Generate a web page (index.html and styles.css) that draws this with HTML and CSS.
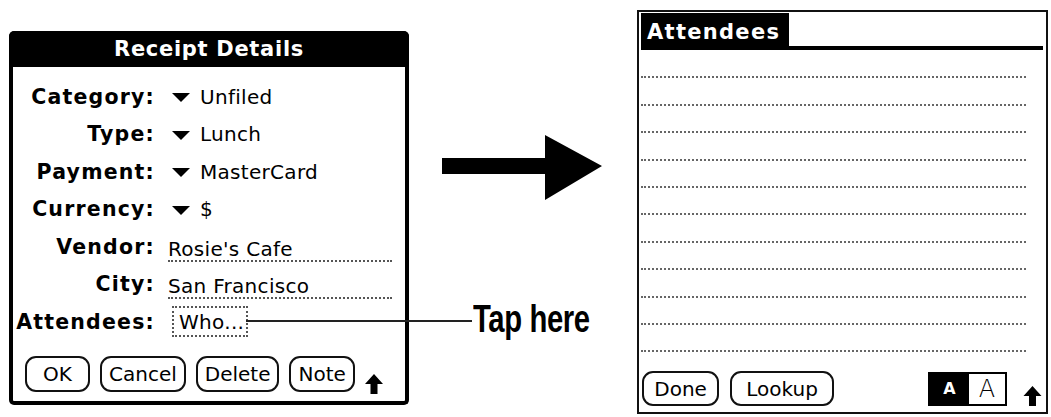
FILE: index.html
```html
<!DOCTYPE html>
<html>
<head>
<meta charset="utf-8">
<link rel="stylesheet" href="styles.css">
</head>
<body>
<div class="page">
  <div class="receipt">
    <div class="receipt-title">Receipt Details</div>
    <div class="fields">
      <div class="label">Category:</div>
      <div class="value"><span class="tri"></span>Unfiled</div>
      <div class="label">Type:</div>
      <div class="value"><span class="tri"></span>Lunch</div>
      <div class="label">Payment:</div>
      <div class="value"><span class="tri"></span>MasterCard</div>
      <div class="label">Currency:</div>
      <div class="value"><span class="tri"></span>$</div>
      <div class="label">Vendor:</div>
      <div class="value"><span class="field">Rosie's Cafe</span></div>
      <div class="label">City:</div>
      <div class="value"><span class="field">San Francisco</span></div>
      <div class="label">Attendees:</div>
      <div class="value"><span class="who">Who...</span></div>
    </div>
    <div class="btn-row">
      <span class="btn">OK</span>
      <span class="btn">Cancel</span>
      <span class="btn">Delete</span>
      <span class="btn">Note</span>
      <svg class="up" width="18" height="20" viewBox="0 0 18 20"><polygon points="9,0 18,10 12.5,10 12.5,20 5.5,20 5.5,10 0,10" fill="#000"/></svg>
    </div>
  </div>

  <div class="middle">
    <svg class="arrow" width="160" height="66" viewBox="0 0 160 66"><polygon points="0,23 103,23 103,0 160,31 103,65 103,39 0,39" fill="#000"/></svg>
    <div class="tap"><span>Tap here</span></div>
  </div>

  <div class="attendees">
    <div class="att-head">
      <div class="att-tab">Attendees</div>
      <div class="att-rule"></div>
    </div>
    <div class="lines">
      <div class="line"></div><div class="line"></div><div class="line"></div>
      <div class="line"></div><div class="line"></div><div class="line"></div>
      <div class="line"></div><div class="line"></div><div class="line"></div>
      <div class="line"></div><div class="line"></div>
    </div>
    <div class="att-foot">
      <span class="btn done">Done</span>
      <span class="btn lookup">Lookup</span>
      <div class="fontsel"><span class="fs-on">A</span><span class="fs-off">A</span></div>
      <svg class="up2" width="22" height="20" viewBox="0 0 18 20"><polygon points="9,0 18,10 12.5,10 12.5,20 5.5,20 5.5,10 0,10" fill="#000"/></svg>
    </div>
  </div>
</div>
</body>
</html>
```
FILE: styles.css
```css
html, body {
  margin: 0;
  padding: 0;
  background: #fff;
}
body {
  width: 1051px;
  height: 417px;
  overflow: hidden;
  font-family: "DejaVu Sans", sans-serif;
  color: #000;
}
.page {
  display: flex;
  align-items: flex-start;
}

/* Left dialog */
.receipt {
  margin: 31px 0 0 9px;
  width: 400px;
  height: 374px;
  box-sizing: border-box;
  border: 4px solid #000;
  border-top: 0;
  border-radius: 6px 6px 5px 5px;
  display: flex;
  flex-direction: column;
}
.receipt-title {
  background: #000;
  color: #fff;
  height: 36px;
  margin: 0 -4px;
  border-radius: 5px 5px 0 0;
  display: flex;
  align-items: center;
  justify-content: center;
  font-weight: bold;
  font-size: 21px;
  letter-spacing: 0.7px;
}
.fields {
  display: grid;
  grid-template-columns: 142px 1fr;
  grid-auto-rows: 37.5px;
  column-gap: 13px;
  padding-top: 11px;
  padding-right: 13px;
}
.label {
  text-align: right;
  font-weight: bold;
  font-size: 20.5px;
  letter-spacing: 1.2px;
  display: flex;
  align-items: center;
  justify-content: flex-end;
  white-space: nowrap;
}
.value {
  display: flex;
  align-items: center;
  font-size: 20px;
  letter-spacing: 0.3px;
  white-space: nowrap;
  color: #000;
}
.tri {
  width: 0;
  height: 0;
  border-left: 9px solid transparent;
  border-right: 9px solid transparent;
  border-top: 9px solid #000;
  margin: 2px 10px 0 4px;
}
.field {
  flex: 1;
  border-bottom: 2px dotted #555;
  line-height: 22px;
  margin-top: 6px;
}
.who {
  position: relative;
  margin-left: 4px;
  padding: 0 5px;
  height: 31px;
  width: 76px;
  box-sizing: border-box;
  border: 2px dotted #555;
  display: flex;
  align-items: center;
}
.who::after {
  content: "";
  position: absolute;
  left: 100%;
  top: 12px;
  width: 226px;
  height: 1.5px;
  background: #222;
}
.btn-row {
  display: flex;
  align-items: center;
  gap: 10px;
  padding: 13px 0 0 12px;
}
.btn {
  height: 36px;
  min-width: 65px;
  box-sizing: border-box;
  border: 2px solid #111;
  border-radius: 11px;
  padding: 0 7px;
  display: inline-flex;
  align-items: center;
  justify-content: center;
  font-size: 20px;
  white-space: nowrap;
}
.up {
  margin: 20px 0 0 0;
}

/* Middle */
.middle {
  width: 228px;
  display: flex;
  flex-direction: column;
}
.arrow {
  margin: 135px 0 0 33px;
}
.tap {
  margin: 98px 0 0 64px;
  height: 40px;
}
.tap span {
  display: inline-block;
  font-family: "Liberation Sans", Arial, sans-serif;
  font-weight: bold;
  font-size: 39px;
  line-height: 40px;
  letter-spacing: -0.5px;
  transform: scaleX(0.75);
  transform-origin: left center;
  white-space: nowrap;
}

/* Right dialog */
.attendees {
  margin-top: 10px;
  width: 411px;
  height: 404px;
  box-sizing: border-box;
  border: 2px solid #111;
  padding: 1px 3px 0 2px;
  display: flex;
  flex-direction: column;
}
.att-head {
  display: flex;
  height: 37px;
}
.att-tab {
  width: 148px;
  background: #000;
  color: #fff;
  font-weight: bold;
  font-size: 21px;
  letter-spacing: 1.3px;
  display: flex;
  align-items: center;
  padding-left: 6px;
  box-sizing: border-box;
}
.att-rule {
  flex: 1;
  border-bottom: 4px solid #000;
}
.lines {
  padding: 1px 17px 0 0;
}
.line {
  height: 27.4px;
  box-sizing: border-box;
  border-bottom: 2px dotted #666;
}
.att-foot {
  display: flex;
  align-items: center;
  margin-top: 19px;
  gap: 11px;
  padding-left: 1px;
}
.att-foot .btn {
  height: 35px;
}
.done {
  width: 80px;
}
.lookup {
  width: 108px;
}
.fontsel {
  margin-left: 83px;
  display: flex;
  height: 34px;
  border: 2px solid #000;
  box-sizing: border-box;
}
.fs-on {
  width: 39px;
  background: #000;
  color: #fff;
  font-weight: bold;
  font-size: 16px;
  display: flex;
  align-items: center;
  justify-content: center;
}
.fs-off {
  width: 36px;
  font-size: 24px;
  font-weight: 300;
  display: flex;
  align-items: center;
  justify-content: center;
}
.up2 {
  margin: 14px 0 0 4px;
}
```
